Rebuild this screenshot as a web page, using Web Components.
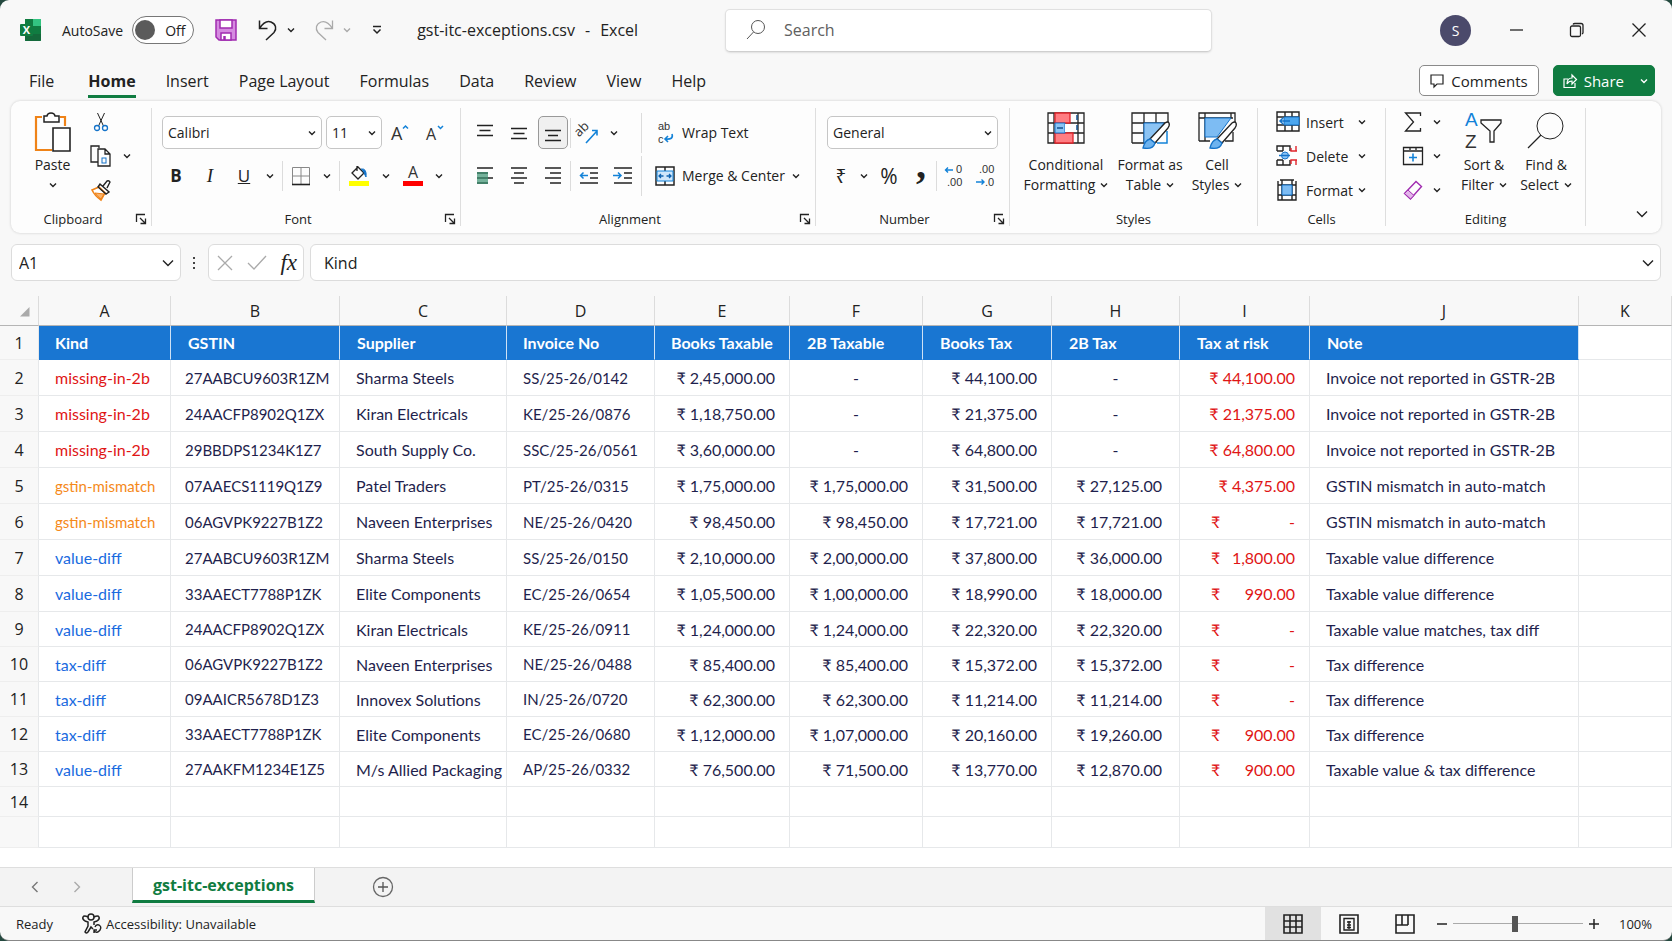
<!DOCTYPE html>
<html lang="en">
<head>
<meta charset="utf-8">
<title>gst-itc-exceptions.csv - Excel</title>
<style>
     html { height: 100%; }
     body {
          margin: 0;
          min-height: 100%;
          display: flex;
          background: #24493f;
          font-family: "Open Sans", "Noto Sans", sans-serif;
          font-size: 14px;
          color: #222;
     }
</style>
</head>
<body>
<excel-window></excel-window>
<script>
// shared by every shadow root
const base = `
     * { box-sizing: border-box; }
     button, select, input { font: inherit; color: inherit; margin: 0; }
     button {
          display: flex;
          align-items: center;
          justify-content: center;
          background: none;
          border: 0;
          padding: 0;
          cursor: pointer;
     }
`;
const define = (name, html, setup) => {
     const template = document.createElement('template');
     template.innerHTML = html;
     window.customElements.define(name, class extends HTMLElement {
          constructor(){
               super();
               this.attachShadow({mode: 'open'});
               this.shadowRoot.appendChild(template.content.cloneNode(true));
          }
          connectedCallback(){
               if(setup) setup(this, this.shadowRoot);
          }
     });
};

// name: [width, height, markup]
const icons = {
     chevron: [8, 8, '<path d="M1 2.5l3 3 3-3" stroke-width="1.4"/>'],
     bigchevron: [14, 14, '<path d="M2 4.5l5 5 5-5" stroke-width="1.4"/>'],
     launcher: [12, 12, '<path d="M1.5 9V1.5H10M5 5l5 5M10.500 5.500v5h-5" stroke-width="1.3"/>'],
     logo: [24, 24, `<g stroke="none"><path d="M6 1h15a1 1 0 0 1 1 1v20a1 1 0 0 1-1 1H6z" fill="#21a366"/><path d="M6 1h8v7H6z" fill="#107c41"/><path d="M14 1h7a1 1 0 0 1 1 1v6h-8z" fill="#33c481"/><path d="M6 8h8v8H6z" fill="#185c37"/><path d="M14 8h8v8h-8z" fill="#107c41"/><path d="M6 16h16v6a1 1 0 0 1-1 1H7a1 1 0 0 1-1-1z" fill="#14693b"/><rect x="1" y="6" width="13" height="12" rx="1" fill="#107c41"/><text x="7.500" y="16" text-anchor="middle" font-size="11" font-weight="700" fill="#fff">X</text></g>`],
     save: [22, 22, '<g stroke="#a02bb0" stroke-width="1.500"><path d="M1 1h20v20H4l-3-3z" fill="#d58be0"/><path d="M5 1h12v8H5z" fill="#fff"/><path d="M6 21v-7h10v7z" fill="#fff"/><path d="M9.500 17v4" stroke-width="2.500"/></g>'],
     undo: [20, 22, '<path d="M1.500 1.500v8h8M1.500 9.500C5 4 9 1.500 13 3c5 2 6 7 3 10.500L8 21" stroke-width="1.500"/>'],
     redo: [20, 22, '<path d="M18.500 1.500v8h-8M18.500 9.500C15 4 11 1.500 7 3c-5 2-6 7-3 10.500L12 21" stroke-width="1.300"/>'],
     customize: [12, 12, '<path d="M2 2.500h8M2.500 5.500L6 9l3.500-3.500" stroke-width="1.500"/>'],
     search: [22, 22, '<circle cx="13" cy="8" r="6.500"/><path d="M8.500 13L2 20"/>'],
     minimise: [14, 14, '<path d="M1 7h13" stroke-width="1.300"/>'],
     restore: [16, 16, '<rect x="1.500" y="4" width="10" height="10.500" rx="1.500" stroke-width="1.300"/><path d="M4 2.500Q4.500 1.500 6 1.500h6q2 0 2 2v7q0 1-1 1.500" stroke-width="1.300"/>'],
     close: [16, 16, '<path d="M1.500 1.500l13 13M14.500 1.500l-13 13" stroke-width="1.300"/>'],
     comment: [16, 16, '<path d="M2 2h12v9H8l-3 3v-3H2z" stroke-width="1.200"/>'],
     share: [16, 16, '<path d="M6 6H2v8.500h11V10M5 11c0-4 2-6 5-6V2l4.500 4.500L10 11V8c-2 0-4 1-5 3z" stroke-width="1.200"/>'],
     paste: [38, 42, '<path d="M8 5H2v33h16M26 5h5v9" stroke="#ef8318" stroke-width="2.200"/><path d="M10 4h3q.500-3 4-3t4 3h4v6H10z" fill="#fff" stroke-width="1.500"/><path d="M19 16h17v23H19z" fill="#fff" stroke-width="1.600"/>'],
     cut: [16, 20, '<path d="M4.500 1l6 13M11.500 1l-6 13"/><g stroke="#1473c9" stroke-width="1.300"><circle cx="4" cy="16" r="2.500"/><circle cx="12" cy="16" r="2.500"/></g>'],
     copy: [22, 22, '<path d="M8 17H1V1h8v2M8 4h7l5 5v12H8zM15 4v5h5" stroke-width="1.300"/><rect x="12" y="13" width="4" height="5" stroke="#1473c9"/>'],
     painter: [22, 22, '<path d="M2 11l7-3 6 6-4 7q-6-4-9-10z" fill="#fff" stroke="#ef8318" stroke-width="1.600"/><path d="M5 14l9 1-3 5q-3-2-6-6z" fill="#f9b26b" stroke="#ef8318"/><path d="M8 8l2-3 9 8-3 2zM13 7l4-5q2-1 3 1l-3 6" stroke-width="1.400"/>'],
     grow: [18, 20, '<text x="0" y="17" font-size="18" fill="#333" stroke="none">A</text><path d="M12 5.500l2.500-2.500L17 5.500" stroke="#1382d8" stroke-width="1.500"/>'],
     shrink: [18, 20, '<text x="0" y="17" font-size="16" fill="#333" stroke="none">A</text><path d="M12 3l2.500 2.500L17 3" stroke="#1382d8" stroke-width="1.500"/>'],
     borders: [20, 20, '<path d="M1.500 18V1.500h17V18M10 2v16M2 10h16" stroke="#888"/><path d="M1 18.500h18" stroke-width="1.600"/>'],
     fill: [22, 22, '<path d="M4 8l6-6 6 6-6 6zM9 6V1" stroke-width="1.300"/><path d="M13 4q6-1 5 8l-2-4" stroke="#1473c9" fill="#1473c9"/><path d="M1 16h20v5H1z" fill="#ff0" stroke="none"/>'],
     color: [22, 22, '<text x="11" y="13" text-anchor="middle" font-size="16" fill="#333" stroke="none">A</text><path d="M1 16h20v5H1z" fill="#f00" stroke="none"/>'],
     top: [18, 20, '<path d="M1 2.500h16M3.500 7.500h11M1 12.500h16" stroke-width="1.500"/>'],
     middle: [18, 20, '<path d="M1 5.500h16M3.500 10.500h11M1 15.500h16" stroke-width="1.500"/>'],
     bottom: [18, 20, '<path d="M1 7.500h16M4 12.500h10M1 17.500h16" stroke-width="1.500"/>'],
     left: [18, 20, '<path d="M1 2h16M1 7h11M1 12h16M1 17h11" stroke-width="1.500"/><path d="M1 6h11v12H1z" fill="#3b9270" fill-opacity=".7" stroke="none"/>'],
     center: [18, 20, '<path d="M1 2h16M4 7h10M1 12h16M4 17h10" stroke-width="1.500"/>'],
     right: [18, 20, '<path d="M1 2h16M6 7h11M1 12h16M6 17h11" stroke-width="1.500"/>'],
     orient: [22, 22, '<text x="0" y="11" font-size="13" fill="#333" stroke="none" transform="rotate(-45 6 12)">ab</text><path d="M8 21L19 9M14 8.500h5v5" stroke="#1382d8" stroke-width="1.600"/>'],
     outdent: [20, 20, '<path d="M1 2h18M11 7h8M11 12h8M1 17h18" stroke-width="1.500"/><path d="M9 9.500H1.500M4.500 6.500l-3 3 3 3" stroke="#1382d8" stroke-width="1.500"/>'],
     indent: [20, 20, '<path d="M1 2h18M11 7h8M11 12h8M1 17h18" stroke-width="1.500"/><path d="M0 9.500h8M5 6.500l3 3-3 3" stroke="#1382d8" stroke-width="1.500"/>'],
     wrap: [20, 22, '<g font-family="Liberation Sans" font-size="11" fill="#333" stroke="none"><text x="3" y="8">ab</text><text x="3" y="21">c</text></g><path d="M17 12q2 6-7 5M13 14l-3 3 3 3" stroke="#1382d8" stroke-width="1.600"/>'],
     merge: [20, 20, '<path d="M1 1h18v18H1zM10 1v4M10 15v4" stroke-width="1.500"/><path d="M2 5h16v10H2z" fill="#cfe6fa" stroke="#1382d8"/><path d="M4 10h4.500M6 8l-2 2 2 2M16 10h-4.500M14 8l2 2-2 2" stroke="#0e62b0" stroke-width="1.300"/>'],
     decup: [22, 22, '<g font-family="Liberation Sans" font-size="11" fill="#333" stroke="none"><text x="13" y="8">0</text><text x="4" y="21">.00</text></g><path d="M10 5H2.500M5 2.500L2.500 5 5 7.500" stroke="#1382d8" stroke-width="1.400"/>'],
     decdown: [22, 22, '<g font-family="Liberation Sans" font-size="11" fill="#333" stroke="none"><text x="4" y="8">.00</text><text x="10" y="21">.0</text></g><path d="M1 17h8M6.500 14.500L9 17l-2.500 2.500" stroke="#1382d8" stroke-width="1.400"/>'],
     conditional: [38, 32, '<path d="M1 1h36v30H1zM1 11h36M1 21h36M7 1v30M31 1v30" stroke-width="1.300"/><path d="M8 1h15v10H8zM8 21h18v10H8z" fill="#ff7d82" stroke="#e0242b" stroke-width="1.300"/><path d="M8 11h10v10H8z" fill="#8cc4f4" stroke="#1473c9"/><path d="M18 12h12v8H18z" fill="#fff" stroke="none"/><path d="M10 16h6M30 3v5M30 13v5" stroke="#12508f" stroke-width="1.500"/>'],
     table: [40, 38, '<path d="M2 31V1h36v9M14 1v30M26 1v30M2 11h34M2 21h24M2 31h13" stroke-width="1.300"/><path d="M14 11h20L20 31h-6z" fill="#8cc4f4" stroke="#1473c9"/><path d="M27 31h10V19" stroke="#1382d8" stroke-width="1.500"/><path d="M20 27L35 11q3-2 4 0t-1 5L25 31z" fill="#fff" stroke-width="1.300"/><path d="M13 36q2-8 7-9l5 4q-2 7-12 5z" fill="#6db3ef" stroke="#1473c9" stroke-width="1.300"/>'],
     cell: [40, 38, '<path d="M2 29V1h36v9M2 29h11M8 1v28M2 6h34M34 1v5M36 20v9h-8" stroke-width="1.300"/><path d="M8 6h26L20 25H8z" fill="#7dbcf3" stroke="#1473c9"/><path d="M20 27L35 11q3-2 4 0t-1 5L25 31z" fill="#fff" stroke-width="1.300"/><path d="M13 36q2-8 7-9l5 4q-2 7-12 5z" fill="#6db3ef" stroke="#1473c9" stroke-width="1.300"/>'],
     insert: [24, 22, '<path d="M1 1h22v19H1zM9 1v19M16 1v19M1 6h22M1 14h22" stroke-width="1.400"/><path d="M8 6h15v8H8z" fill="#4ba6ee" stroke="#1473c9"/><path d="M4 10h10M7 7l-3 3 3 3" stroke="#1473c9" stroke-width="1.500"/>'],
     delete: [24, 22, '<path d="M1 6V1h13v5M7 1v5M1 15v5h13v-5M7 15v5M1 6h6M1 15h6" stroke-width="1.400"/><circle cx="9" cy="10.500" r="3.500" fill="#8cc4f4" stroke="#1473c9"/><path d="M3 10.500h11" stroke="#1473c9" stroke-width="1.500"/><path d="M20 1v5h-5V3M20 20v-5h-5v4M21 6h-3M21 15h-3" stroke="#e0242b" stroke-width="1.400"/>'],
     format: [24, 22, '<path d="M2 2v19h18V2M6 1v20M16 1v20M2 6h18M2 16h18M4 1h14" stroke-width="1.400"/><path d="M6 6h10v10H6z" fill="#7dbcf3" stroke="#1473c9"/>'],
     sum: [18, 20, '<path d="M16.500 4V1H1.500l8 9-8 9h15v-3" stroke-width="1.300"/>'],
     filldown: [22, 20, '<path d="M1.500 1.500h19v17h-19zM2 5h18M8 1v3M14 1v3" stroke-width="1.300"/><path d="M11 7.500v8M7 11.500h8" stroke="#1382d8" stroke-width="1.600"/>'],
     clear: [20, 20, '<path d="M1.500 13.500L13 1.500l5.500 5L7.500 19z" stroke="#a02bb0" stroke-width="1.400"/><path d="M1.500 13.500L5 10l6 5.500L7.500 19z" fill="#e3b5ea" stroke="#a02bb0"/>'],
     sort: [40, 38, '<g font-family="Liberation Sans" font-size="19" stroke="none"><text x="1" y="14" fill="#1382d8">A</text><text x="1" y="36" fill="#333">Z</text></g><path d="M17 8h20v3l-7 8v11h-4V19l-9-8z" stroke-width="1.300"/>'],
     find: [38, 38, '<circle cx="23" cy="14" r="13"/><path d="M14 23L1 36" stroke-width="1.300"/>'],
     cancel: [18, 18, '<path d="M2 2l14 14M16 2L2 16" stroke="#aaa" stroke-width="1.300"/>'],
     accept: [20, 18, '<path d="M1 9l6 6L19 2" stroke="#aaa" stroke-width="1.300"/>'],
     dots: [4, 14, '<path d="M1 1h2v2H1zM1 6h2v2H1zM1 11h2v2H1z" fill="#444" stroke="none"/>'],
     corner: [10, 10, '<path d="M9.500 0v9.500H0z" fill="#aaa" stroke="none"/>'],
     prev: [10, 14, '<path d="M7.500 2L2.500 7l5 5" stroke="#777" stroke-width="1.400"/>'],
     next: [10, 14, '<path d="M2.500 2l5 5-5 5" stroke="#aaa" stroke-width="1.400"/>'],
     add: [22, 22, '<circle cx="11" cy="11" r="9.500" stroke="#666" stroke-width="1.300"/><path d="M11 6v10M6 11h10" stroke="#555" stroke-width="1.300"/>'],
     access: [22, 22, '<circle cx="10" cy="4" r="3" stroke-width="1.500"/><path d="M7 4Q3 2 2 4t2 4l3 1v4l-3 6q1 2 3 0l3-5 2 2M13 4q4-2 5 0t-2 4l-3 1v3" stroke-width="1.500"/><path d="M14 14q1-3 4-2 3 2 1 5-3 4-6 1M13 20v-3h3" stroke-width="1.400"/>'],
     normal: [20, 20, '<path d="M1 1h18v18H1zM7 1v18M13 1v18M1 7h18M1 13h18" stroke-width="1.600"/>'],
     layout: [20, 20, '<path d="M1 1h18v18H1z" stroke-width="1.600"/><path d="M5 4.500h10v11.500H5zM8 8h4M8 11h4M8 13.500h4M10 7v8" stroke-width="1.400"/>'],
     pagebreak: [20, 20, '<path d="M1 1h18v18H1zM7 1v10M13 1v10M1 11h12" stroke-width="1.600"/>'],
     minus: [12, 12, '<path d="M1 6h10" stroke-width="1.500"/>'],
     plus: [12, 12, '<path d="M1 6h10M6 1v10" stroke-width="1.500"/>']
};

define('ui-icon', `<style>
     :host { display: inline-flex; flex: none; }
     svg { display: block; overflow: visible; }
     </style>`, (host, root) => {
     const [w, h, body] = icons[host.getAttribute('name')];
     const holder = document.createElement('template');
     holder.innerHTML = `<svg width="${w}" height="${h}" viewBox="0 0 ${w} ${h}" fill="none" stroke="currentColor" aria-hidden="true">${body}</svg>`;
     root.appendChild(holder.content);
});

// one square of the ribbon, or the narrow chevron beside it
define('tool-button', `<style>${base}
     :host { display: block; flex: none; width: var(--w, 34px); box-sizing: border-box; }
     button { width: 100%; height: 33px; }
     :host([pressed]) { padding: 0 2px; }
     :host([pressed]) button { background: #f0f0f0; border: 1px solid #999; border-radius: 5px; }
     </style><button type="button"><slot></slot></button>`, (host, root) => {
     root.querySelector('button').setAttribute('aria-label', host.getAttribute('label') || 'More options');
     if(host.hasAttribute('w')) host.style.setProperty('--w', host.getAttribute('w') + 'px');
});

// tall button: picture over two lines of caption
define('big-button', `<style>${base}
     :host { display: block; flex: none; box-sizing: border-box; }
     button { flex-direction: column; justify-content: flex-start; width: 100%; line-height: 20px; white-space: nowrap; }
     .art { display: flex; height: 43px; align-items: flex-start; }
     .second { display: flex; align-items: center; gap: 5px; min-height: 20px; }
     </style><button type="button">
     <span class="art"><slot name="icon"></slot></span>
     <span><slot></slot></span>
     <span class="second"><slot name="second"></slot><ui-icon name="chevron"></ui-icon></span>
     </button>`);

define('combo-box', `<style>${base}
     :host { display: grid; grid-template-columns: 1fr 14px; align-items: center; }
     select {
          grid-area: 1 / 1 / 2 / 3;
          appearance: none;
          height: 33px;
          width: 100%;
          padding: 0 18px 0 5px;
          border: 1px solid #c6c6c6;
          border-radius: 5px;
          background: #fff;
     }
     ui-icon { grid-area: 1 / 2; pointer-events: none; }
     </style><select></select><ui-icon name="chevron"></ui-icon>`, (host, root) => {
     const select = root.querySelector('select');
     select.add(new Option(host.getAttribute('value')));
     select.setAttribute('aria-label', host.getAttribute('label'));
});

define('ribbon-group', `<style>${base}
     :host { display: flex; flex-direction: column; flex: none; height: 118px; border-right: 1px solid #dedede; box-sizing: border-box; }
     .body { flex: 1; min-height: 0; }
     .foot { display: flex; align-items: center; height: 14px; line-height: 14px; font-size: 13px; padding-right: 4px; }
     .name { flex: 1; text-align: center; }
     :host(:not([launcher])) .launcher { display: none; }
     :host(:not([launcher])) .foot { padding: 0; }
     </style>
     <div class="body"><slot></slot></div>
     <div class="foot"><span class="name"></span><button class="launcher" type="button" aria-label="More settings"><ui-icon name="launcher"></ui-icon></button></div>`,
     (host, root) => {
     root.querySelector('.name').textContent = host.getAttribute('name');
});

define('title-bar', `<style>${base}
     :host { display: grid; grid-template-columns: 725fr 487fr 460fr; align-items: center; height: 60px; }
     .left, .right { display: flex; align-items: center; }
     .left { padding-left: 19px; }
     .left ui-icon[name=chevron] { margin: 0 9px; }
     .autosave { display: flex; align-items: center; gap: 9px; margin: 0 21px 0 19px; }
     .switch {
          display: flex;
          align-items: center;
          width: 62px;
          height: 28px;
          border: 1px solid #777;
          border-radius: 14px;
          background: #fff;
          padding-left: 2px;
          gap: 10px;
     }
     .switch input { appearance: none; width: 20px; height: 20px; border-radius: 50%; background: #5b5b5b; }
     .name { display: flex; gap: 10px; margin-left: 34px; font-size: 16px; white-space: nowrap; }
     .search {
          display: flex;
          align-items: center;
          gap: 15px;
          height: 43px;
          padding: 0 19px;
          background: #fff;
          border: 1px solid #e0e0e0;
          border-bottom-color: #cfcfcf;
          border-radius: 5px;
          box-shadow: 0 1px 2px rgba(0,0,0,0.1);
          color: #555;
     }
     .search input { flex: 1; min-width: 0; border: 0; outline: 0; background: none; font-size: 16px; }
     .search input::placeholder { color: #606060; }
     .right { justify-content: flex-end; padding-right: 25px; gap: 46px; }
     .avatar { width: 31px; height: 31px; border-radius: 50%; background: #4b4a6b; color: #fff; margin-right: -8px; }
     </style>
     <div class="left">
          <ui-icon name="logo"></ui-icon>
          <label class="autosave">AutoSave<span class="switch"><input type="checkbox">Off</span></label>
          <button aria-label="Save"><ui-icon name="save"></ui-icon></button>
          <button aria-label="Undo" style="margin-left: 21px"><ui-icon name="undo"></ui-icon><ui-icon name="chevron"></ui-icon></button>
          <button aria-label="Redo" style="margin-left: 10px; color: #aaa"><ui-icon name="redo"></ui-icon><ui-icon name="chevron"></ui-icon></button>
          <button aria-label="Customize toolbar" style="margin-left: 11px"><ui-icon name="customize"></ui-icon></button>
          <div class="name"><span>gst-itc-exceptions.csv</span><span>-</span><span>Excel</span></div>
     </div>
     <label class="search"><ui-icon name="search"></ui-icon><input type="text" placeholder="Search" aria-label="Search"></label>
     <div class="right">
          <button class="avatar" aria-label="Account">S</button>
          <button aria-label="Minimise"><ui-icon name="minimise"></ui-icon></button>
          <button aria-label="Restore"><ui-icon name="restore"></ui-icon></button>
          <button aria-label="Close"><ui-icon name="close"></ui-icon></button>
     </div>`);

define('menu-bar', `<style>${base}
     :host { display: flex; align-items: center; height: 41px; padding: 0 17px 0 14px; }
     nav { display: flex; flex: 1; font-size: 16px; }
     nav button { height: 34px; margin: 0 15px; white-space: nowrap; border: solid transparent; border-width: 3px 0; }
     nav .on { font-weight: 700; border-bottom-color: #107c41; margin-left: 19px; }
     .action { height: 31px; border-radius: 5px; border: 1px solid #8a8a8a; background: #fff; font-size: 15px; padding: 0 10px 0 9px; gap: 6px; margin-left: 14px; }
     .share { background: #107c41; border-color: #107c41; color: #fff; padding: 0 6px 0 8px; }
     .share ui-icon[name=chevron] { margin-left: 10px; }
     </style>
     <nav>
          <button>File</button><button class="on">Home</button><button>Insert</button><button>Page Layout</button><button>Formulas</button><button>Data</button><button>Review</button><button>View</button><button>Help</button>
     </nav>
     <button class="action"><ui-icon name="comment"></ui-icon>Comments</button>
     <button class="action share"><ui-icon name="share"></ui-icon>Share<ui-icon name="chevron"></ui-icon></button>`);

define('ribbon-bar', `<style>${base}
     :host {
          display: flex;
          margin: 0 11px;
          height: 132px;
          box-sizing: border-box;
          padding-top: 7px;
          background: #fdfdfd;
          border-radius: 9px;
          box-shadow: 0 0 3px rgba(0,0,0,0.18);
     }
     .row { display: flex; align-items: center; height: 43px; }
     .row:first-child { padding-top: 3px; height: 46px; }
     .sep { flex: none; width: 1px; height: 30px; background: #dcdcdc; }
     .font .sep { margin: 0 1px 0 3px; }
     .clip { display: grid; grid-template-columns: 78px 30px auto; grid-auto-rows: 34px; align-items: center; justify-items: start; margin-top: -3px; }
     .paste { grid-row: 1 / 4; align-self: start; width: 78px; padding: 7px 0 0 5px; }
     .cols { display: flex; }
     .list { display: grid; grid-auto-rows: 34px; align-items: center; margin-top: -3px; }
     .list button { justify-content: flex-start; }
     .cells button { display: grid; grid-template-columns: 30px 52px 8px; text-align: left; justify-content: start; }
     .text { display: flex; align-items: center; gap: 7px; height: 33px; white-space: nowrap; }
     .list .text { gap: 9px; }
     .big { padding-top: 4px; }
     b, i, u { font-size: 17px; }
     i { font-family: "Liberation Serif", serif; font-size: 19px; }
     .rupee { font-size: 19px; }
     .percent { font-size: 21px; }
     .comma { font-family: "Liberation Serif", serif; font-size: 40px; font-weight: 700; line-height: 10px; padding-bottom: 21px; }
     .end { flex: 1; display: flex; justify-content: flex-end; align-items: flex-end; padding: 0 12px 12px 0; }
     </style>
     <ribbon-group name="Clipboard" launcher style="width: 141px">
          <div class="clip">
               <big-button class="paste"><ui-icon slot="icon" name="paste"></ui-icon>Paste</big-button>
               <tool-button w="24" label="Cut"><ui-icon name="cut"></ui-icon></tool-button><span></span>
               <tool-button w="24" label="Copy"><ui-icon name="copy"></ui-icon></tool-button>
               <tool-button w="16"><ui-icon name="chevron"></ui-icon></tool-button>
               <tool-button w="24" label="Format painter"><ui-icon name="painter"></ui-icon></tool-button>
          </div>
     </ribbon-group>
     <ribbon-group name="Font" launcher style="width: 309px">
          <div class="row" style="padding-left: 10px">
               <combo-box label="Font" value="Calibri" style="width: 160px; margin-right: 4px"></combo-box>
               <combo-box label="Font size" value="11" style="width: 56px"></combo-box>
               <tool-button w="36" label="Increase font size"><ui-icon name="grow"></ui-icon></tool-button>
               <tool-button w="34" label="Decrease font size"><ui-icon name="shrink"></ui-icon></tool-button>
          </div>
          <div class="row font" style="padding-left: 7px">
               <tool-button label="Bold"><b>B</b></tool-button>
               <tool-button label="Italic"><i>I</i></tool-button>
               <tool-button label="Underline"><u>U</u></tool-button>
               <tool-button w="18"><ui-icon name="chevron"></ui-icon></tool-button>
               <span class="sep"></span>
               <tool-button label="Borders"><ui-icon name="borders"></ui-icon></tool-button>
               <tool-button w="18"><ui-icon name="chevron"></ui-icon></tool-button>
               <span class="sep"></span>
               <tool-button w="36" label="Fill colour"><ui-icon name="fill"></ui-icon></tool-button>
               <tool-button w="18"><ui-icon name="chevron"></ui-icon></tool-button>
               <tool-button w="36" label="Font colour"><ui-icon name="color"></ui-icon></tool-button>
               <tool-button w="16"><ui-icon name="chevron"></ui-icon></tool-button>
          </div>
     </ribbon-group>
     <ribbon-group name="Alignment" launcher style="width: 355px">
          <div class="row" style="padding-left: 7px">
               <tool-button label="Top align"><ui-icon name="top"></ui-icon></tool-button>
               <tool-button label="Middle align"><ui-icon name="middle"></ui-icon></tool-button>
               <tool-button pressed label="Bottom align"><ui-icon name="bottom"></ui-icon></tool-button>
               <span class="sep"></span>
               <tool-button w="36" label="Orientation"><ui-icon name="orient"></ui-icon></tool-button>
               <tool-button w="14"><ui-icon name="chevron"></ui-icon></tool-button>
               <span class="sep" style="margin: 0 13px 0 20px; height: 40px"></span>
               <button class="text"><ui-icon name="wrap"></ui-icon>Wrap Text</button>
          </div>
          <div class="row" style="padding-left: 7px">
               <tool-button label="Align left"><ui-icon name="left"></ui-icon></tool-button>
               <tool-button label="Center"><ui-icon name="center"></ui-icon></tool-button>
               <tool-button label="Align right"><ui-icon name="right"></ui-icon></tool-button>
               <span class="sep"></span>
               <tool-button w="36" label="Decrease indent"><ui-icon name="outdent"></ui-icon></tool-button>
               <tool-button w="32" label="Increase indent"><ui-icon name="indent"></ui-icon></tool-button>
               <span class="sep" style="margin: 0 13px 0 2px; height: 40px"></span>
               <button class="text"><ui-icon name="merge"></ui-icon>Merge &amp; Center<ui-icon name="chevron"></ui-icon></button>
          </div>
     </ribbon-group>
     <ribbon-group name="Number" launcher style="width: 194px">
          <div class="row" style="padding-left: 11px">
               <combo-box label="Number format" value="General" style="width: 171px"></combo-box>
          </div>
          <div class="row" style="padding-left: 10px">
               <tool-button w="30" label="Currency"><span class="rupee">₹</span></tool-button>
               <tool-button w="16"><ui-icon name="chevron"></ui-icon></tool-button>
               <tool-button label="Percent"><span class="percent">%</span></tool-button>
               <tool-button w="30" label="Comma style"><span class="comma">,</span></tool-button>
               <span class="sep"></span>
               <tool-button label="Increase decimals"><ui-icon name="decup"></ui-icon></tool-button>
               <tool-button w="30" label="Decrease decimals"><ui-icon name="decdown"></ui-icon></tool-button>
          </div>
     </ribbon-group>
     <ribbon-group name="Styles" style="width: 248px">
          <div class="cols big" style="padding-left: 10px">
               <big-button style="width: 92px"><ui-icon slot="icon" name="conditional"></ui-icon>Conditional<span slot="second">Formatting</span></big-button>
               <big-button style="width: 76px"><ui-icon slot="icon" name="table"></ui-icon>Format as<span slot="second">Table</span></big-button>
               <big-button style="width: 58px"><ui-icon slot="icon" name="cell"></ui-icon>Cell<span slot="second">Styles</span></big-button>
          </div>
     </ribbon-group>
     <ribbon-group name="Cells" style="width: 128px">
          <div class="list cells" style="padding-left: 18px">
               <button><ui-icon name="insert"></ui-icon>Insert<ui-icon name="chevron"></ui-icon></button>
               <button><ui-icon name="delete"></ui-icon>Delete<ui-icon name="chevron"></ui-icon></button>
               <button><ui-icon name="format"></ui-icon>Format<ui-icon name="chevron"></ui-icon></button>
          </div>
     </ribbon-group>
     <ribbon-group name="Editing" style="width: 200px">
          <div class="cols">
               <div class="list" style="padding-left: 16px; width: 65px">
                    <button aria-label="AutoSum" class="text"><ui-icon name="sum" style="width: 22px; justify-content: center"></ui-icon><ui-icon name="chevron"></ui-icon></button>
                    <button aria-label="Fill" class="text"><ui-icon name="filldown"></ui-icon><ui-icon name="chevron"></ui-icon></button>
                    <button aria-label="Clear" class="text"><ui-icon name="clear" style="width: 22px; justify-content: center"></ui-icon><ui-icon name="chevron"></ui-icon></button>
               </div>
               <div class="cols big">
                    <big-button style="width: 66px"><ui-icon slot="icon" name="sort"></ui-icon>Sort &amp;<span slot="second">Filter</span></big-button>
                    <big-button style="width: 58px"><ui-icon slot="icon" name="find"></ui-icon>Find &amp;<span slot="second">Select</span></big-button>
               </div>
          </div>
     </ribbon-group>
     <div class="end"><button aria-label="Collapse ribbon"><ui-icon name="bigchevron"></ui-icon></button></div>`);

define('formula-bar', `<style>${base}
     :host { display: flex; align-items: center; padding: 11px 11px 15px; font-size: 16px; }
     .box { display: flex; align-items: center; height: 37px; background: #fff; border: 1px solid #dcdcdc; border-radius: 6px; }
     input { border: 0; outline: 0; background: none; min-width: 0; flex: 1; padding: 0; }
     .name { width: 170px; padding: 0 5px 0 7px; }
     ui-icon[name=dots] { margin: 0 12px 0 11px; }
     .fx { width: 96px; justify-content: space-between; padding: 0 6px 0 7px; margin-right: 6px; }
     .fx i { font: italic 400 23px "Liberation Serif", serif; }
     .formula { flex: 1; padding: 0 5px 0 13px; }
     </style>
     <div class="box name"><input type="text" value="A1" aria-label="Name box"><button aria-label="Names"><ui-icon name="bigchevron"></ui-icon></button></div>
     <ui-icon name="dots"></ui-icon>
     <div class="box fx"><button aria-label="Cancel"><ui-icon name="cancel"></ui-icon></button><button aria-label="Enter"><ui-icon name="accept"></ui-icon></button><button aria-label="Insert function"><i>fx</i></button></div>
     <div class="box formula"><input type="text" value="Kind" aria-label="Formula"><button aria-label="Expand formula bar"><ui-icon name="bigchevron"></ui-icon></button></div>`);

const headings = ['Kind', 'GSTIN', 'Supplier', 'Invoice No', 'Books Taxable', '2B Taxable', 'Books Tax', '2B Tax', 'Tax at risk', 'Note'];
const widths = [39, 132, 169, 167, 148, 135, 133, 129, 128, 130, 269];
const rows = [
     ['missing-in-2b', '27AABCU9603R1ZM', 'Sharma Steels', 'SS/25-26/0142', '2,45,000.00', '-', '44,100.00', '-', '₹ 44,100.00', 'Invoice not reported in GSTR-2B'],
     ['missing-in-2b', '24AACFP8902Q1ZX', 'Kiran Electricals', 'KE/25-26/0876', '1,18,750.00', '-', '21,375.00', '-', '₹ 21,375.00', 'Invoice not reported in GSTR-2B'],
     ['missing-in-2b', '29BBDPS1234K1Z7', 'South Supply Co.', 'SSC/25-26/0561', '3,60,000.00', '-', '64,800.00', '-', '₹ 64,800.00', 'Invoice not reported in GSTR-2B'],
     ['gstin-mismatch', '07AAECS1119Q1Z9', 'Patel Traders', 'PT/25-26/0315', '1,75,000.00', '1,75,000.00', '31,500.00', '27,125.00', '₹ 4,375.00', 'GSTIN mismatch in auto-match'],
     ['gstin-mismatch', '06AGVPK9227B1Z2', 'Naveen Enterprises', 'NE/25-26/0420', '98,450.00', '98,450.00', '17,721.00', '17,721.00', '-', 'GSTIN mismatch in auto-match'],
     ['value-diff', '27AABCU9603R1ZM', 'Sharma Steels', 'SS/25-26/0150', '2,10,000.00', '2,00,000.00', '37,800.00', '36,000.00', '1,800.00', 'Taxable value difference'],
     ['value-diff', '33AAECT7788P1ZK', 'Elite Components', 'EC/25-26/0654', '1,05,500.00', '1,00,000.00', '18,990.00', '18,000.00', '990.00', 'Taxable value difference'],
     ['value-diff', '24AACFP8902Q1ZX', 'Kiran Electricals', 'KE/25-26/0911', '1,24,000.00', '1,24,000.00', '22,320.00', '22,320.00', '-', 'Taxable value matches, tax diff'],
     ['tax-diff', '06AGVPK9227B1Z2', 'Naveen Enterprises', 'NE/25-26/0488', '85,400.00', '85,400.00', '15,372.00', '15,372.00', '-', 'Tax difference'],
     ['tax-diff', '09AAICR5678D1Z3', 'Innovex Solutions', 'IN/25-26/0720', '62,300.00', '62,300.00', '11,214.00', '11,214.00', '-', 'Tax difference'],
     ['tax-diff', '33AAECT7788P1ZK', 'Elite Components', 'EC/25-26/0680', '1,12,000.00', '1,07,000.00', '20,160.00', '19,260.00', '900.00', 'Tax difference'],
     ['value-diff', '27AAKFM1234E1Z5', 'M/s Allied Packaging', 'AP/25-26/0332', '76,500.00', '71,500.00', '13,770.00', '12,870.00', '900.00', 'Taxable value & tax difference']
];

define('sheet-grid', `<style>${base}
     :host { display: block; flex: 1; background: #fff; font-family: Lato, "Open Sans", sans-serif; font-size: 16px; }
     table { width: 100%; table-layout: fixed; border-collapse: separate; border-spacing: 0; }
     td, th { padding: 0; border: solid #e6e8ea; border-width: 0 1px 1px 0; white-space: nowrap; text-align: left; font-weight: 400; }
     tr { height: 36px; }
     tbody tr:nth-child(n+9) { height: 35px; }
     tbody tr:first-child { height: 34px; }
     thead tr, tbody tr:nth-child(14) { height: 30px; }
     tbody tr:nth-child(15) { height: 31px; }
     thead th, tbody th { font-family: "Open Sans", sans-serif; text-align: center; background: #f8f8f8; }
     thead th { border-bottom-color: #b5b5b5; border-right-color: #dcdcdc; }
     thead th:first-child { text-align: right; padding-right: 8px; }
     tbody th { border-bottom-color: #eee; }
     td { padding-left: 16px; color: #1f1f4d; }
     td:nth-child(3) { font-size: 15px; padding-left: 14px; }
     td:nth-child(5), td.gstin { font-size: 15px; }
     .head td { background: #1976d2; color: #fff; font-size: 16px; font-weight: 700; padding-left: 17px; border-bottom-color: #1976d2; border-right-color: #cfe2f5; }
     .head td:nth-child(2), .head td:nth-child(5), .head td:nth-child(6) { padding-left: 16px; }
     .head td:last-child { background: none; border-color: #e6e8ea; }
     td.num { text-align: right; padding: 0 14px 0 0; }
     td.num:nth-child(9) { padding-right: 17px; }
     td.dash { text-align: center; padding: 0; }
     td.missing, td.risk { color: #e01515; }
     td.gstin { color: #f5891a; }
     td.value, td.tax { color: #1a6be0; }
     .pair { display: flex; justify-content: space-between; padding-left: 31px; }
     </style><table><colgroup></colgroup><thead><tr></tr></thead><tbody></tbody></table>`, (host, root) => {
     root.querySelector('colgroup').innerHTML = widths.map(w => `<col style="width: ${w}px">`).join('') + '<col>';
     root.querySelector('thead tr').innerHTML = '<th><ui-icon name="corner"></ui-icon></th>' + [...'ABCDEFGHIJK'].map(c => `<th>${c}</th>`).join('');
     const cell = (text, i) => {
          if(i == 0) return `<td class="${text.split('-')[0]}">${text}</td>`;
          if(i < 4 || i == 9) return `<td>${text.replace('&', '&amp;')}</td>`;
          if(i == 8) return `<td class="num risk">${text[0] == '₹' ? text : `<span class="pair"><span>₹</span><span>${text}</span></span>`}</td>`;
          return text == '-' ? '<td class="dash">-</td>' : `<td class="num">₹ ${text}</td>`;
     };
     const blank = '<td></td>'.repeat(11);
     root.querySelector('tbody').innerHTML = '<tr class="head"><th>1</th>' + headings.map(h => `<td>${h}</td>`).join('') + '<td></td></tr>'
          + rows.map((r, n) => `<tr><th>${n + 2}</th>${r.map(cell).join('')}<td></td></tr>`).join('')
          + `<tr><th>14</th>${blank}</tr><tr><th></th>${blank}</tr>`;
});

define('sheet-tabs', `<style>${base}
     :host { display: flex; align-items: flex-start; height: 40px; box-sizing: border-box; background: #f3f3f3; border: solid #dedede; border-width: 1px 0; }
     .nav { width: 132px; height: 38px; display: flex; align-items: center; gap: 32px; padding-left: 30px; }
     .tab { height: 35px; width: 183px; background: #fff; border: solid #ccc; border-width: 0 1px; border-bottom: 3px solid #107c41; color: #107c41; font-weight: 700; font-size: 16px; padding-top: 2px; }
     .add { height: 38px; margin-left: 57px; }
     </style>
     <div class="nav"><button aria-label="Previous sheet"><ui-icon name="prev"></ui-icon></button><button aria-label="Next sheet"><ui-icon name="next"></ui-icon></button></div>
     <button class="tab">gst-itc-exceptions</button>
     <button class="add" aria-label="New sheet"><ui-icon name="add"></ui-icon></button>`);

define('status-bar', `<style>${base}
     :host { display: flex; align-items: center; height: 33px; padding: 0 20px 0 16px; font-size: 13px; }
     .access { margin-left: 28px; gap: 3px; flex: 1; display: flex; align-items: center; }
     .view { width: 56px; height: 33px; }
     .view.on { background: #e1e1e1; }
     .out { margin-left: 3px; }
     .zoom { margin: 0 5px; display: flex; }
     input { appearance: none; width: 130px; height: 16px; background: linear-gradient(#aaa, #aaa) center / 100% 1px no-repeat; }
     input::-webkit-slider-thumb { appearance: none; width: 6px; height: 16px; background: #555; }
     .percent { margin-left: 19px; }
     </style>
     <span>Ready</span>
     <span class="access"><ui-icon name="access"></ui-icon>Accessibility: Unavailable</span>
     <button class="view on" aria-label="Normal"><ui-icon name="normal"></ui-icon></button>
     <button class="view" aria-label="Page layout"><ui-icon name="layout"></ui-icon></button>
     <button class="view" aria-label="Page break preview"><ui-icon name="pagebreak"></ui-icon></button>
     <button class="out" aria-label="Zoom out"><ui-icon name="minus"></ui-icon></button>
     <label class="zoom"><input type="range" min="10" max="200" value="100" aria-label="Zoom"></label>
     <button aria-label="Zoom in"><ui-icon name="plus"></ui-icon></button>
     <span class="percent">100%</span>`);

define('excel-window', `<style>
     :host { display: flex; flex-direction: column; flex: 1; min-width: 0; background: #f8f8f8; border-radius: 9px; border-bottom: 1px solid #888; box-sizing: border-box; overflow: hidden; }
     </style>
     <title-bar></title-bar>
     <menu-bar></menu-bar>
     <ribbon-bar></ribbon-bar>
     <formula-bar></formula-bar>
     <sheet-grid></sheet-grid>
     <sheet-tabs></sheet-tabs>
     <status-bar></status-bar>`);
</script>
</body>
</html>
